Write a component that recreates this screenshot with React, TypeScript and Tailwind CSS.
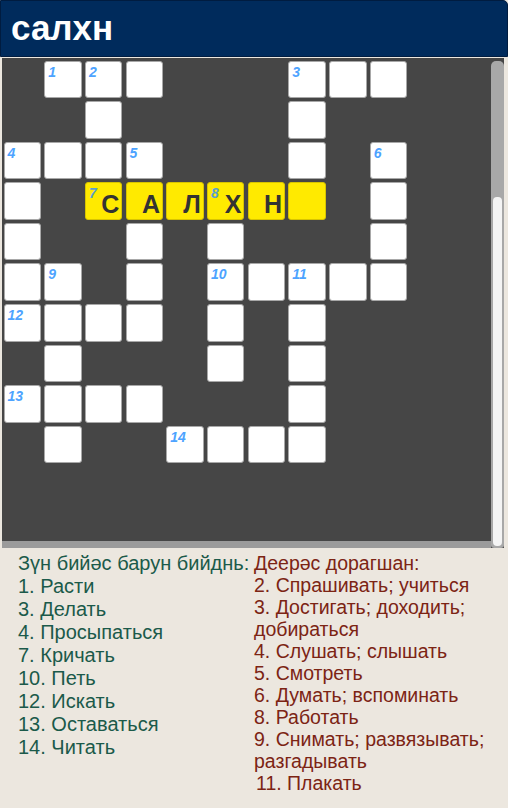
import React from "react";

type Cell = { n?: number; ch?: string; hl?: boolean };

// 12 columns, rows 0..9 visible in the board
const cells: Record<string, Cell> = {
    "0-1": { n: 1 }, "0-2": { n: 2 }, "0-3": {}, "0-7": { n: 3 }, "0-8": {}, "0-9": {},
    "1-2": {}, "1-7": {},
    "2-0": { n: 4 }, "2-1": {}, "2-2": {}, "2-3": { n: 5 }, "2-7": {}, "2-9": { n: 6 },
    "3-0": {}, "3-2": { n: 7, ch: "С", hl: true }, "3-3": { ch: "А", hl: true }, "3-4": { ch: "Л", hl: true },
    "3-5": { n: 8, ch: "Х", hl: true }, "3-6": { ch: "Н", hl: true }, "3-7": { hl: true }, "3-9": {},
    "4-0": {}, "4-3": {}, "4-5": {}, "4-9": {},
    "5-0": {}, "5-1": { n: 9 }, "5-3": {}, "5-5": { n: 10 }, "5-6": {}, "5-7": { n: 11 }, "5-8": {}, "5-9": {},
    "6-0": { n: 12 }, "6-1": {}, "6-2": {}, "6-3": {}, "6-5": {}, "6-7": {},
    "7-1": {}, "7-5": {}, "7-7": {},
    "8-0": { n: 13 }, "8-1": {}, "8-2": {}, "8-3": {}, "8-7": {},
    "9-1": {}, "9-4": { n: 14 }, "9-5": {}, "9-6": {}, "9-7": {},
};

const across = [
    "1. Расти", "3. Делать", "4. Просыпаться", "7. Кричать",
    "10. Петь", "12. Искать", "13. Оставаться", "14. Читать",
];

const down = [
    "2. Спрашивать; учиться",
    "3. Достигать; доходить; добираться",
    "4. Слушать; слышать",
    "5. Смотреть",
    "6. Думать; вспоминать",
    "8. Работать",
    "9. Снимать; развязывать; разгадывать",
];

const Square = ({ cell }: { cell?: Cell }) => {
    if (!cell) return <div className="w-[37.5px] h-[37.5px]" />;
    return (
        <div
            className={
                cell.hl
                    ? "relative w-[37.5px] h-[37.5px] rounded-[3px] bg-[#ffea00] border border-[#d8c400] flex items-end justify-end pr-[2px] pb-[2px]"
                    : "relative w-[37.5px] h-[37.5px] rounded-[3px] bg-white border border-[#a8a8a8]"
            }
        >
            {cell.n && (
                <span
                    className={
                        cell.hl
                            ? "absolute top-[3px] left-[3px] text-[14px] leading-none italic font-bold text-[#5a9fcc]"
                            : "absolute top-[3px] left-[3px] text-[14px] leading-none italic font-bold text-[#4da3ff]"
                    }
                >
                    {cell.n}
                </span>
            )}
            {cell.ch && (
                <span className="text-[25px] leading-none font-bold text-[#333333]">{cell.ch}</span>
            )}
        </div>
    );
};

export default function App() {
    const rows = Array.from({ length: 10 }, (_, r) => r);
    const cols = Array.from({ length: 12 }, (_, c) => c);

    return (
        <div className="w-[508px] h-[808px] overflow-hidden bg-[#ece7df] font-['Liberation_Sans',Arial,sans-serif]">
            <header className="h-[57px] bg-[#002b5c] border border-[#001c40] rounded-tr-[5px] flex items-center px-[10px]">
                <h1 className="text-white font-bold text-[35px] leading-none pb-[2px]">салхн</h1>
            </header>

            <div className="flex mt-px ml-[2px] h-[490px]">
                <div className="w-[489px] flex flex-col">
                    <div className="h-[483px] bg-[#464646] overflow-hidden pl-[1.5px] pt-[2.5px]">
                        <div className="grid grid-cols-[repeat(12,37.5px)] gap-x-[3.2px] gap-y-[3.1px]">
                            {rows.map((r) =>
                                cols.map((c) => <Square key={`${r}-${c}`} cell={cells[`${r}-${c}`]} />)
                            )}
                        </div>
                    </div>
                    <div className="h-[7px] bg-[#9b9b9b]" />
                </div>
                <div className="w-[13px] bg-[#464646] pt-[3px] flex flex-col">
                    <div className="flex-1 bg-[#a8a8a8] rounded-t-[5px] rounded-b-[3px] px-[2px] pt-[136px] pb-[2px]">
                        <div className="h-full bg-[#f4f4f4] rounded-[4px]" />
                    </div>
                </div>
            </div>

            <div className="flex pt-[4px]">
                <div className="w-[254px] pl-[18px] text-[20px] text-[#1b5a4a] leading-[23px] whitespace-nowrap">
                    <div>Зүн бийәс барун бийднь:</div>
                    {across.map((t) => (
                        <div key={t}>{t}</div>
                    ))}
                </div>
                <div className="w-[248px] text-[19.5px] text-[#7c2414] leading-[22px]">
                    <div>Деерәс дорагшан:</div>
                    {down.map((t) => (
                        <div key={t}>{t}</div>
                    ))}
                    <div className="pl-[2px]">11. Плакать</div>
                </div>
            </div>
        </div>
    );
}
